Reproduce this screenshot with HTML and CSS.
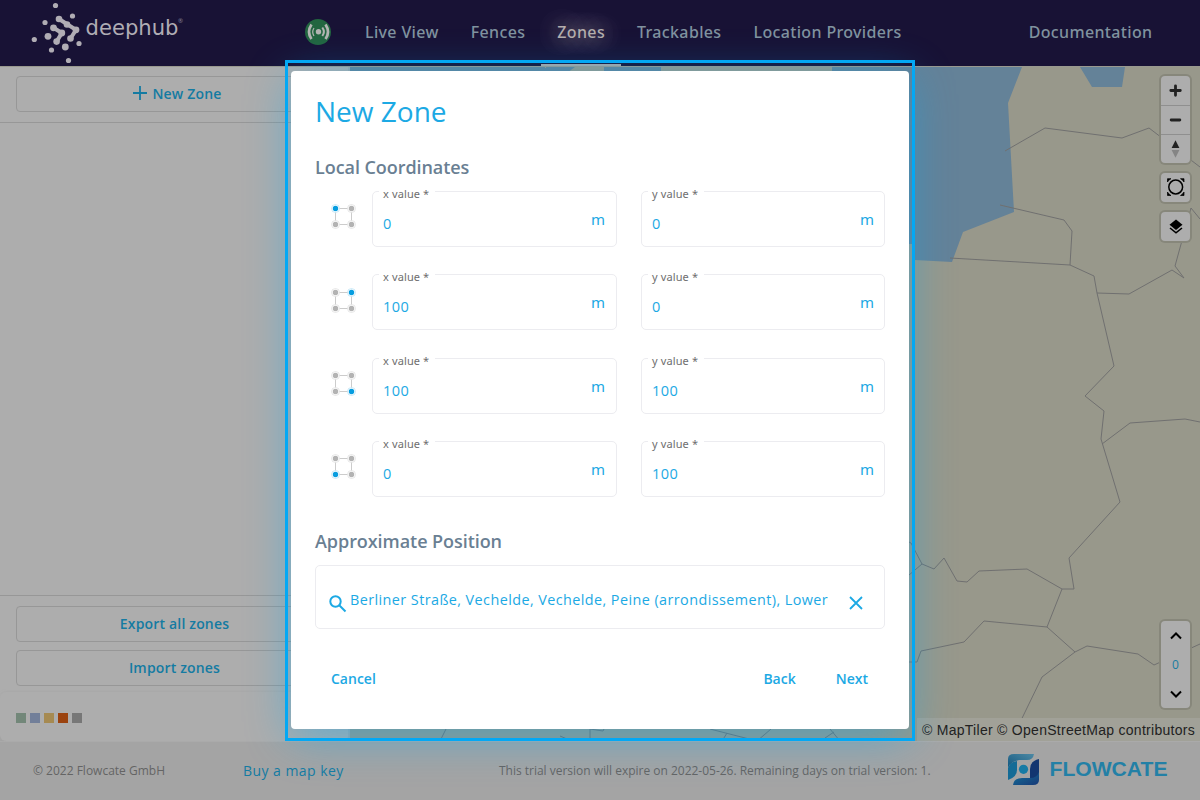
FILE: index.html
```html
<!DOCTYPE html>
<html lang="en">
<head>
<meta charset="utf-8">
<title>deephub – Zones</title>
<link rel="stylesheet" href="styles.css">
</head>
<body>
<div class="app">
  <header class="header">
    <svg class="logo" width="164" height="66" viewBox="0 0 164 66">
      <g fill="#b0adb4">
        <circle cx="31.5" cy="5.5" r="2.6"/><circle cx="48.5" cy="16" r="2.6"/><circle cx="21" cy="22.5" r="2.6"/>
        <circle cx="10.300" cy="39.5" r="2.6"/><circle cx="27.500" cy="50" r="2.6"/><circle cx="44.500" cy="60.5" r="2.6"/>
        <circle cx="55" cy="43.500" r="2.6"/><circle cx="24" cy="36.300" r="3.4"/><circle cx="41.300" cy="47" r="3.4"/>
        <circle cx="35" cy="19" r="3.300"/><circle cx="43" cy="24.500" r="3.300"/><circle cx="52" cy="29.800" r="3.4"/><circle cx="46.500" cy="38.500" r="3.300"/>
        <circle cx="29.500" cy="27.800" r="3.400"/><circle cx="37.800" cy="33" r="3.400"/><circle cx="32.600" cy="41.600" r="3.300"/>
      </g>
      <path d="M35 19L52 29.800L46.500 38.500M29.500 27.800L37.800 33L32.600 41.600" fill="none" stroke="#b0adb4" stroke-width="4"/>
      <text class="logo-name" x="61.500" y="35" textLength="93" lengthAdjust="spacingAndGlyphs">deephub</text>
      <text class="logo-mark" x="154" y="22.500">®</text>
    </svg>
    <svg class="signal" width="26" height="26" viewBox="0 0 26 26">
      <circle cx="13" cy="13" r="13" fill="#226640"/>
      <g fill="none" stroke="#b3b5b3"><path stroke-width="2.700" d="M6.500 5.500Q1.500 13 6.500 20M20.500 5.500Q25.500 13 20.500 20"/><path stroke-width="1.200" d="M9 9Q6.400 13 9 17"/><path stroke-width="2" d="M17.300 8.500Q20.500 13 17.300 17"/></g>
      <circle cx="13.500" cy="12.800" r="2.700" fill="#b3b5b3"/>
    </svg>
    <nav class="nav">
      <a class="nav-item">Live View</a><a class="nav-item">Fences</a><a class="nav-item nav-active">Zones</a><a class="nav-item">Trackables</a><a class="nav-item">Location Providers</a>
    </nav>
    <a class="nav-item docs">Documentation</a>
  </header>

  <main class="main">
    <aside class="sidebar">
      <div class="side-top"><button class="side-btn add"><svg width="14" height="14" viewBox="0 0 14 14"><path d="M7 0V14M0 7H14" stroke="#147ba2" stroke-width="1.800"/></svg>New Zone</button></div>
      <div class="side-bottom"><button class="side-btn">Export all zones</button><button class="side-btn">Import zones</button></div>
      <div class="palette"><i class="c1"></i><i class="c2"></i><i class="c3"></i><i class="c4"></i><i class="c5"></i></div>
    </aside>
    <section class="map">
      <svg class="map-canvas" width="850" height="674" viewBox="350 67 850 674">
        <path fill="#648298" d="M340 67H524L575 67L560 78H340ZM547 67H661V78H547ZM832 67H1022L1008 103L1014 212L963 232L952 262L915 260V244H832ZM1080 67H1125L1122 87H1092Z"/>
        <path fill="#98988b" d="M575 67H604V78H560Z"/>
        <path fill="#98988b" d="M545 67H546V68H545Z"/>
        <g fill="none" stroke="#707070" stroke-width="1">
          <path d="M1005 151L1045 128L1122 138L1149 128L1200 167M1000 205L1064 220L1072 231L1070 265M950 258L1070 265L1094 276L1097 293L1114 366L1085 396L1104 411L1101 439L1120 502L1069 558L1074 589H1062M1097 293L1129 294L1172 270L1184 278L1175 266L1191 208L1200 219M1102 444L1130 423L1185 419L1200 422"/>
          <path d="M905 540L911 543L922 564L934 569L944 558L957 581L967 582L979 571L1027 569L1062 589L1047 627L1075 652L1087 646L1138 654L1154 665L1200 644M909 575L922 564M909 662H917L921 651L964 642L984 621L1047 627M1075 652L1042 677L1011 741"/>
          <path d="M446 729L440 741M590 741V729L603 731L604 729M710 729L757 741L771 729M727 733L722 741M830 729L840 741M825 738L834 732M560 736L567 739"/>
        </g>
      </svg>
      <div class="controls">
        <div class="ctl zoomer">
          <svg viewBox="0 0 29 29"><path d="M14.500 9.800V19.300M9.800 14.500H19.300" stroke="#222" stroke-width="2.800" stroke-linecap="round"/></svg>
          <svg viewBox="0 0 29 29"><path d="M10 14.500H19" stroke="#222" stroke-width="2.900" stroke-linecap="round"/></svg>
          <svg viewBox="0 0 29 29"><path d="M10.500 13.500L14.500 5.500L18.500 13.500Z" fill="#222"/><path d="M10.500 15.500H18.500L14.500 23.500Z" fill="#858585"/></svg>
        </div>
        <div class="ctl"><svg viewBox="0 0 29 29"><circle cx="14.700" cy="14" r="6.900" fill="none" stroke="#000" stroke-width="1.500"/><path d="M6.500 9V5.700H10L8 7ZM19.500 5.700H23V9L21.500 7ZM6.500 19V22.500H10L8 21ZM19.500 22.500H23V19L21.500 21Z" stroke="#000" stroke-width=".7"/></svg></div>
        <div class="ctl"><svg viewBox="0 0 29 29"><path d="M15 7.500L21.500 12.800L15 18L8.500 12.800Z"/><path d="M9 16L15 20.800L21 16" fill="none" stroke="#000" stroke-width="1.600"/></svg></div>
      </div>
      <div class="ctl levels">
        <svg viewBox="0 0 29 29"><path d="M10 17.500L15 12.500L20 17.500" fill="none" stroke="#000" stroke-width="2"/></svg>
        <span>0</span>
        <svg viewBox="0 0 29 29"><path d="M10 12.500L15 17.500L20 12.500" fill="none" stroke="#000" stroke-width="2"/></svg>
      </div>
      <div class="credit">© MapTiler © OpenStreetMap contributors</div>
    </section>
  </main>

  <footer class="footer">
    <span class="copyright">© 2022 Flowcate GmbH</span>
    <a class="buy">Buy a map key</a>
    <span class="trial">This trial version will expire on 2022-05-26. Remaining days on trial version: 1.</span>
    <svg class="flowcate" width="162" height="33" viewBox="0 0 162 33">
      <defs>
        <linearGradient id="g1" x1="0" y1="1" x2="1" y2="0"><stop stop-color="#125780"/><stop offset="1" stop-color="#4d89a4"/></linearGradient>
        <linearGradient id="g2" x1="0" y1="0" x2="1" y2="1"><stop stop-color="#147299"/><stop offset="1" stop-color="#173877"/></linearGradient>
      </defs>
      <path d="M1 15V6Q1 1 7 1H27Q26 7 20 7H12Q3 9 1 15Z" fill="url(#g1)"/>
      <path d="M1 15Q3 9 10 8V17Q10 24 1 27Z" fill="#146b96"/>
      <path d="M32 6V22Q30 26 23 26V16Q23 8 32 6Z" fill="#123570"/>
      <path d="M6 32Q7 25 15 25H23Q30 25 32 19V27Q32 32 26 32Z" fill="url(#g2)"/>
      <circle cx="16.500" cy="16.300" r="4.600" fill="#167ba5"/>
      <text class="flowcate-name" x="42.500" y="23.300" textLength="118" lengthAdjust="spacingAndGlyphs">FLOWCATE</text>
    </svg>
  </footer>
</div>

<div class="frame"></div>
<div class="dialog">
  <h1 class="title">New Zone</h1>
  <h2 class="subtitle">Local Coordinates</h2>
  <div class="rows" id="rows"></div>
  <h2 class="subtitle second">Approximate Position</h2>
  <div class="search">
    <svg class="search-icon" width="18" height="18" viewBox="0 0 18 18"><g fill="none" stroke="#1ca9e4" stroke-width="2"><circle cx="6.500" cy="6.500" r="5.200"/><path d="M10.500 10.500L16.500 16.500"/></g></svg>
    <span class="address">Berliner Straße, Vechelde, Vechelde, Peine (arrondissement), Lower</span>
    <svg class="clear" width="14" height="14" viewBox="0 0 14 14"><path d="M1 1L13 13M13 1L1 13" stroke="#1ca9e4" stroke-width="1.800"/></svg>
  </div>
  <div class="actions"><button class="action">Cancel</button><span class="spacer"></span><button class="action">Back</button><button class="action">Next</button></div>
</div>
<script src="script.js"></script>
</body>
</html>
```
FILE: styles.css
```css
* { box-sizing: border-box; }
body { margin: 0; font-family: "Open Sans", sans-serif; overflow: hidden; }
button { font: inherit; background: none; border: 0; padding: 0; }
.app { width: 1200px; height: 800px; display: grid; grid-template-rows: 66px 676px 58px; background: #a4a4a4; }
.header { background: #181235; display: flex; align-items: center; }
.logo { margin-left: 24px; flex: none; }
.logo-name { font: 21px "DejaVu Sans", sans-serif; fill: #b0adb4; }
.logo-mark { font: 6px "Open Sans", sans-serif; fill: #8a8799; }
.signal { margin-left: 117px; margin-top: -2px; flex: none; }
.nav { display: flex; height: 66px; margin-left: 18px; }
.nav-item { height: 66px; line-height: 64px; padding: 0 16px; font-family: "Noto Sans", sans-serif; font-size: 16px; font-weight: 500; letter-spacing: .35px; color: #80929f; white-space: nowrap; }
.nav-active { color: #b3adac; border-bottom: 2px solid #a8a8a8; text-shadow: 0 0 20px #d0c8c0, 0 0 34px #8c8480; }
.docs { margin-left: auto; margin-right: 31.5px; }
.main { display: grid; grid-template-columns: 350px 850px; border-top: 1px solid #99998f; border-bottom: 1px solid #aaa; }
.sidebar { display: flex; flex-direction: column; background: #adadad; border-right: 2px solid #a0a5a8; border-radius: 0 0 0 6px; }
.side-top { height: 56px; padding: 9px 15px 0 16px; border-bottom: 1px solid #979797; }
.side-bottom { margin-top: auto; height: 97px; padding: 10px 15px 0 16px; border-top: 1px solid #979797; display: flex; flex-direction: column; gap: 8px; }
.side-btn { width: 100%; height: 36px; padding-bottom: 2px; display: flex; align-items: center; justify-content: center; gap: 5px; border: 1px solid #979797; border-radius: 4px; color: #147ba2; font-size: 14px; font-weight: 600; letter-spacing: .17px; }
.add { padding-left: 6px; }
.palette { height: 49px; padding: 21px 16px; display: flex; gap: 4px; border-radius: 6px; box-shadow: 0 -1px 2px #a8a8a8; }
.palette i { width: 10px; height: 10px; }
.c1 { background: #728779; } .c2 { background: #727f99; } .c3 { background: #a68a51; } .c4 { background: #9b430f; } .c5 { background: #777; }
.map { position: relative; background: #98988b; overflow: hidden; }
.map-canvas { display: block; }
.controls { position: absolute; right: 10px; top: 9px; display: grid; gap: 10px; }
.ctl { width: 29px; background: #adadad; border-radius: 4px; box-shadow: 0 0 0 2px #87877b; }
.ctl svg { display: block; width: 29px; height: 29px; }
.zoomer svg + svg { border-top: 1px solid #8f8f8f; }
.levels { position: absolute; right: 10px; top: 554px; height: 87px; display: grid; grid-template-rows: 29px 29px 29px; }
.levels span { color: #197ca1; font-size: 12px; line-height: 29px; text-align: center; }
.credit { position: absolute; right: 0; bottom: 0; height: 23px; padding: 0 5px; background: #a1a198; color: #222; font: 14px/24px "Liberation Sans", sans-serif; white-space: nowrap; letter-spacing: .28px; }
.footer { display: flex; align-items: center; padding-bottom: 2px; color: #646464; font-size: 12px; white-space: nowrap; }
.copyright { margin-left: 33px; width: 210px; }
.buy { width: 256px; color: #147ba2; font-size: 14px; letter-spacing: .45px; }
.trial { width: 508px; letter-spacing: -.01px; }
.flowcate { flex: none; margin-top: -1px; }
.flowcate-name { font: bold 19.5px "Liberation Sans", sans-serif; fill: #2380a6; }

.frame { position: absolute; left: 285px; top: 60px; width: 630px; height: 681px; border: 3px solid #03a8f4; z-index: 2; }
.dialog { position: absolute; left: 291px; top: 71px; width: 618px; height: 658px; padding: 24px; background: #fff; border-radius: 4px; display: flex; flex-direction: column; box-shadow: 0 8px 45px rgba(3,168,244,.45); }
.title { margin: 0; height: 36px; line-height: 32px; font-size: 28px; font-weight: 400; color: #1ca9e4; }
.subtitle { margin: 24px 0 0; height: 24px; line-height: 24px; font-size: 18px; font-weight: 600; letter-spacing: -.06px; color: #6a7f93; }
.rows { margin-top: 12px; display: flex; flex-direction: column; gap: 27.4px; }
.row { display: grid; grid-template-columns: 57px 245px 244px; height: 56px; }
.row .field:last-child { margin-left: 24px; width: 244px; }
.corners { margin: 13.2px 0 0 16px; }
.field { position: relative; height: 56px; border: 1px solid #ececf0; border-radius: 5px; display: flex; justify-content: space-between; padding: 0 11px 0 10px; color: #1ca9e4; font-size: 15px; }
.field:last-child { padding-right: 10px; }
.label { position: absolute; left: 6px; top: -6px; padding: 0 6px 0 4px; height: 15px; line-height: 15px; background: #fff; color: #6e6e6e; font-family: "Noto Sans", sans-serif; font-size: 11px; letter-spacing: .12px; white-space: nowrap; }
.value { line-height: 63px; font-size: 14.5px; letter-spacing: .5px; }
.unit { line-height: 55px; font-family: "Noto Sans", sans-serif; }
.second { margin-top: 32px; }
.search { margin-top: 12px; height: 64px; border: 1px solid #ececf0; border-radius: 5px; display: flex; align-items: flex-start; flex: none; }
.search-icon { margin: 29px 0 0 13px; flex: none; }
.address { margin-left: 3px; width: 486px; line-height: 67px; height: 62px; font-size: 14.4px; letter-spacing: .42px; color: #1ca9e4; white-space: nowrap; }
.clear { margin: 30px 0 0 12.5px; flex: none; }
.actions { display: flex; margin-top: 31px; padding: 0 17px 0 16px; gap: 40px; height: 36px; }
.spacer { flex: 1; }
.action { color: #1ca9e4; font-size: 14px; font-weight: 600; }
```
FILE: script.js
```js
const points = [[4.5, 4.5], [20.5, 4.5], [20.5, 20.5], [4.5, 20.5]];
const values = [[0, 0], [100, 0], [100, 100], [0, 100]];

function corners(active) {
  const dots = points.map(([x, y], i) =>
    `<circle cx="${x}" cy="${y}" r="4" fill="#fff" stroke="${i === active ? "#b5e0f4" : "#ddd"}" stroke-width=".7"/>` +
    `<circle cx="${x}" cy="${y}" r="2.7" fill="${i === active ? "#069de0" : "#b3b3b3"}"/>`).join("");
  return `<svg class="corners" width="26" height="26" viewBox="0 0 26 26"><rect x="4.500" y="4.500" width="16" height="16" fill="none" stroke="#ccc"/>${dots}</svg>`;
}

function field(axis, value) {
  return `<div class="field"><span class="label">${axis} value *</span><span class="value">${value}</span><span class="unit">m</span></div>`;
}

document.getElementById("rows").innerHTML = values.map(([x, y], i) =>
  `<div class="row">${corners(i)}${field("x", x)}${field("y", y)}</div>`).join("");
```
